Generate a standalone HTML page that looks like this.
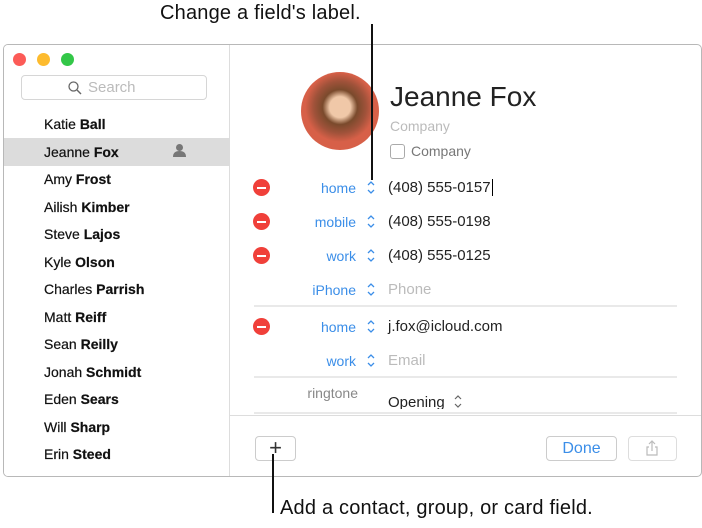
<!DOCTYPE html>
<html><head><style>
*{margin:0;padding:0;box-sizing:border-box}
body{width:702px;height:528px;background:#fff;font-family:"Liberation Sans",sans-serif;position:relative;overflow:hidden}
.a{position:absolute}
.win{left:3px;top:44px;width:699px;height:433px;border:1px solid #b8b8b8;border-radius:5px;background:#fff;overflow:hidden}
.side{left:0;top:0;width:226px;height:431px;background:#fff;border-right:1px solid #ddd}
.dot{width:13px;height:13px;border-radius:50%;top:8px}
.name{left:40px;font-size:14px;color:#111;white-space:nowrap;-webkit-text-stroke:0.2px #111}
.lbl{font-size:14px;color:#3b8ee8;text-align:right;width:100px;left:256px}
.chev{left:364px;width:8px;height:12px}
.val{left:388px;font-size:15px;color:#222}
.ph{color:#bbb}
.minus{left:253px;width:17px;height:17px;border-radius:50%;background:#f0403a}
.minus:after{content:"";position:absolute;left:4px;top:7.5px;width:9px;height:2px;background:#fff}
.sep{left:254px;width:423px;height:2px;background:#e9e9e9}
.ann{font-size:20px;color:#111;letter-spacing:0.2px}
</style></head><body>
<div class="a ann" style="left:160px;top:2px">Change a field's label.</div>
<div class="win a">
 <div class="a side">
  <div class="a dot" style="left:9px;background:#fc5b57"></div>
  <div class="a dot" style="left:33px;background:#fdbb2e"></div>
  <div class="a dot" style="left:57px;background:#33c748"></div>
  <div class="a" style="left:17px;top:30px;width:186px;height:25px;border:1px solid #d6d6d6;border-radius:4px"></div>
  <svg class="a" style="left:64px;top:36px" width="14" height="14"><circle cx="5.5" cy="5.5" r="4.5" fill="none" stroke="#666" stroke-width="1.3"/><line x1="9" y1="9" x2="13" y2="13" stroke="#666" stroke-width="1.4"/></svg>
  <div class="a" style="left:84px;top:34px;font-size:15px;color:#bbb">Search</div>
  <div class="a" style="left:0;top:93px;width:226px;height:28px;background:#dcdcdc"></div>
  <svg class="a" style="left:168px;top:98px" width="15" height="15"><circle cx="7.5" cy="4.5" r="3.5" fill="#777"/><path d="M1 14 Q1 8 7.5 8 Q14 8 14 14Z" fill="#777"/></svg>
  <div class="a name" style="top:71px">Katie <b>Ball</b></div>
  <div class="a name" style="top:99px">Jeanne <b>Fox</b></div>
  <div class="a name" style="top:126px">Amy <b>Frost</b></div>
  <div class="a name" style="top:154px">Ailish <b>Kimber</b></div>
  <div class="a name" style="top:181px">Steve <b>Lajos</b></div>
  <div class="a name" style="top:209px">Kyle <b>Olson</b></div>
  <div class="a name" style="top:236px">Charles <b>Parrish</b></div>
  <div class="a name" style="top:264px">Matt <b>Reiff</b></div>
  <div class="a name" style="top:291px">Sean <b>Reilly</b></div>
  <div class="a name" style="top:319px">Jonah <b>Schmidt</b></div>
  <div class="a name" style="top:346px">Eden <b>Sears</b></div>
  <div class="a name" style="top:374px">Will <b>Sharp</b></div>
  <div class="a name" style="top:401px">Erin <b>Steed</b></div>
 </div>
 <div class="a" style="left:226px;top:370px;width:473px;height:1px;background:#ddd"></div>
 <div class="a" style="left:251px;top:391px;width:41px;height:25px;border:1px solid #ccc;border-radius:4px;text-align:center;font-size:22px;line-height:22px;color:#333">+</div>
 <div class="a" style="left:542px;top:391px;width:71px;height:25px;border:1px solid #ccc;border-radius:4px;text-align:center;font-size:16px;line-height:23px;color:#3b8ee8">Done</div>
 <div class="a" style="left:624px;top:391px;width:49px;height:25px;border:1px solid #ddd;border-radius:4px"></div>
 <svg class="a" style="left:640px;top:394px" width="16" height="18"><path d="M8 2v10M5 5l3-3 3 3M5 8H3v8h10V8h-2" fill="none" stroke="#bbb" stroke-width="1.2"/></svg>
</div>
<div class="a" style="left:301px;top:72px;width:78px;height:78px;border-radius:50%;background:radial-gradient(circle at 50% 45%,#f0c8a8 0 18%,#7a4a2c 30%,#a0523a 45%,#d76048 60%)"></div>
<div class="a" style="left:390px;top:81px;font-size:28px;color:#222">Jeanne Fox</div>
<div class="a" style="left:390px;top:118px;font-size:14px;color:#bbb">Company</div>
<div class="a" style="left:390px;top:144px;width:15px;height:15px;border:1px solid #aaa;border-radius:3px"></div>
<div class="a" style="left:411px;top:143px;font-size:14px;color:#777">Company</div>

<div class="a minus" style="top:179px"></div><div class="a lbl" style="top:180px">home</div><div class="a val" style="top:179px">(408) 555-0157<span style="border-left:1px solid #000;margin-left:1px"></span></div>
<div class="a minus" style="top:213px"></div><div class="a lbl" style="top:214px">mobile</div><div class="a val" style="top:213px">(408) 555-0198</div>
<div class="a minus" style="top:247px"></div><div class="a lbl" style="top:248px">work</div><div class="a val" style="top:247px">(408) 555-0125</div>
<div class="a lbl" style="top:282px">iPhone</div><div class="a val ph" style="top:281px">Phone</div>
<div class="a sep" style="top:305px"></div>
<div class="a minus" style="top:318px"></div><div class="a lbl" style="top:319px">home</div><div class="a val" style="top:318px">j.fox@icloud.com</div>
<div class="a lbl" style="top:353px">work</div><div class="a val ph" style="top:352px">Email</div>
<div class="a sep" style="top:376px"></div>
<div class="a" style="left:258px;top:385px;width:100px;text-align:right;font-size:14px;color:#888">ringtone</div>
<div class="a" style="left:388px;top:394px;height:15px;overflow:hidden;font-size:15px;color:#222">Opening</div>
<div class="a sep" style="top:412px"></div>
<svg class="a" style="left:367px;top:181px" width="8" height="130"><g fill="none" stroke="#3b8ee8" stroke-width="1.3"><path d="M1 4l3-3 3 3M1 9l3 3 3-3"/><path transform="translate(0,34)" d="M1 4l3-3 3 3M1 9l3 3 3-3"/><path transform="translate(0,68)" d="M1 4l3-3 3 3M1 9l3 3 3-3"/><path transform="translate(0,102)" d="M1 4l3-3 3 3M1 9l3 3 3-3"/></g></svg>
<svg class="a" style="left:367px;top:320px" width="8" height="48"><g fill="none" stroke="#3b8ee8" stroke-width="1.3"><path d="M1 4l3-3 3 3M1 9l3 3 3-3"/><path transform="translate(0,34)" d="M1 4l3-3 3 3M1 9l3 3 3-3"/></g></svg>
<svg class="a" style="left:454px;top:395px" width="8" height="14"><path d="M1 4l3-3 3 3M1 9l3 3 3-3" fill="none" stroke="#666" stroke-width="1.2"/></svg>
<div class="a" style="left:371px;top:24px;width:2px;height:156px;background:#111"></div>
<div class="a" style="left:272px;top:454px;width:2px;height:59px;background:#111"></div>
<div class="a ann" style="left:280px;top:497px">Add a contact, group, or card field.</div>
</body></html>
